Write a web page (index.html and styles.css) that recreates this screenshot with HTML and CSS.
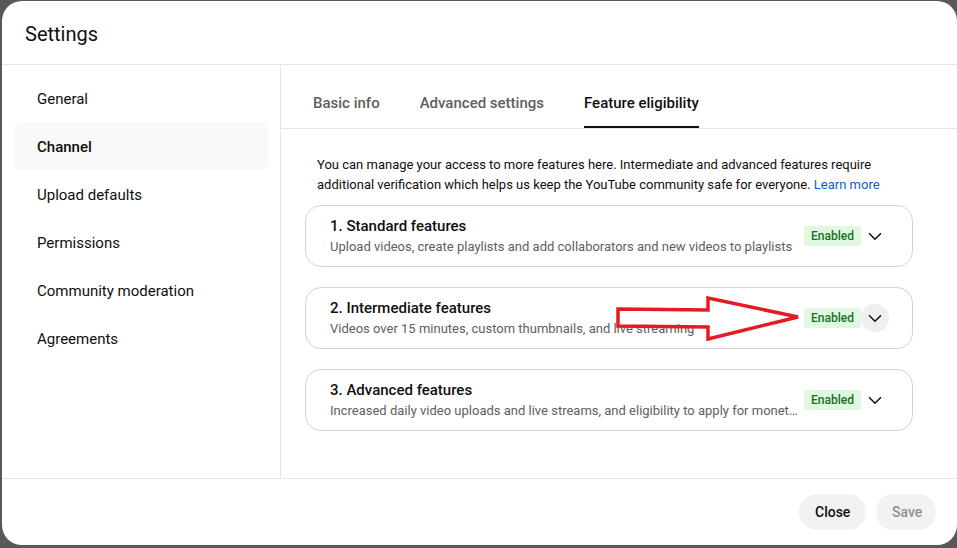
FILE: index.html
```html
<!DOCTYPE html>
<html lang="en">
<head>
<meta charset="utf-8">
<title>Settings</title>
<link rel="stylesheet" href="styles.css">
</head>
<body>
<div class="dialog">
  <div class="header"><h1 class="title">Settings</h1></div>
  <div class="body">
    <nav class="sidebar">
      <div class="nav-item">General</div>
      <div class="nav-item active">Channel</div>
      <div class="nav-item">Upload defaults</div>
      <div class="nav-item">Permissions</div>
      <div class="nav-item">Community moderation</div>
      <div class="nav-item">Agreements</div>
    </nav>
    <main class="main">
      <div class="tabs">
        <div class="tab">Basic info</div>
        <div class="tab">Advanced settings</div>
        <div class="tab active">Feature eligibility</div>
      </div>
      <div class="content">
        <p class="desc">You can manage your access to more features here. Intermediate and advanced features require additional verification which helps us keep the YouTube community safe for everyone. <a class="link">Learn more</a></p>
        <div class="cards">
          <div class="card">
            <div class="card-text">
              <div class="card-title">1. Standard features</div>
              <div class="card-sub">Upload videos, create playlists and add collaborators and new videos to playlists</div>
            </div>
            <span class="badge">Enabled</span>
            <span class="chev"><svg width="24" height="24" viewBox="0 0 24 24"><path d="M5.5 9l6.5 6.5L18.5 9" fill="none" stroke="#0f0f0f" stroke-width="1.6"/></svg></span>
          </div>
          <div class="card">
            <div class="card-text">
              <div class="card-title">2. Intermediate features</div>
              <div class="card-sub">Videos over 15 minutes, custom thumbnails, and live streaming</div>
            </div>
            <span class="badge">Enabled</span>
            <span class="chev hover"><svg width="24" height="24" viewBox="0 0 24 24"><path d="M5.5 9l6.5 6.5L18.5 9" fill="none" stroke="#0f0f0f" stroke-width="1.6"/></svg></span>
          </div>
          <div class="card">
            <div class="card-text">
              <div class="card-title">3. Advanced features</div>
              <div class="card-sub">Increased daily video uploads and live streams, and eligibility to apply for monetization</div>
            </div>
            <span class="badge">Enabled</span>
            <span class="chev"><svg width="24" height="24" viewBox="0 0 24 24"><path d="M5.5 9l6.5 6.5L18.5 9" fill="none" stroke="#0f0f0f" stroke-width="1.6"/></svg></span>
          </div>
        </div>
      </div>
    </main>
  </div>
  <div class="footer">
    <button class="btn">Close</button>
    <button class="btn disabled">Save</button>
  </div>
  <svg class="arrow" width="200" height="60" viewBox="0 0 200 60">
    <polygon points="3,13 93,14 93,2 183,21 93,43 93,31 3,30" fill="none" stroke="#e31b23" stroke-width="3.5" stroke-linejoin="miter"/>
  </svg>
</div>
</body>
</html>
```
FILE: styles.css
```css
* { box-sizing: border-box; }
html, body { margin: 0; padding: 0; }
body {
  background: #595959;
  font-family: Roboto, "Noto Sans", Arial, sans-serif;
  color: #0f0f0f;
  width: 957px;
  height: 548px;
  overflow: hidden;
}
.dialog {
  position: relative;
  margin: 1px 0 0 2px;
  width: 955px;
  height: 544px;
  background: #fff;
  border-radius: 20px;
  display: flex;
  flex-direction: column;
  overflow: hidden;
}
.header {
  height: 64px;
  border-bottom: 1px solid #e5e5e5;
  display: flex;
  align-items: center;
  padding: 2px 23px 0 23px;
}
.title {
  margin: 0;
  font-size: 20px;
  font-weight: 400;
  line-height: 28px;
}
.body {
  display: flex;
  height: 413px;
}
.sidebar {
  flex: none;
  width: 279px;
  border-right: 1px solid #e5e5e5;
  padding: 9px 12px 0 11px;
}
.nav-item {
  height: 48px;
  line-height: 50px;
  padding-left: 24px;
  font-size: 15px;
  border-radius: 8px;
  color: #0f0f0f;
}
.nav-item.active {
  background: #f9f9f9;
  font-weight: 500;
}
.main {
  flex: 1;
  min-width: 0;
  display: flex;
  flex-direction: column;
}
.tabs {
  height: 64px;
  flex: none;
  border-bottom: 1px solid #e5e5e5;
  display: flex;
  align-items: flex-end;
  gap: 40px;
  padding-left: 32px;
}
.tab {
  height: 48px;
  line-height: 46px;
  font-size: 15px;
  font-weight: 500;
  color: #606060;
  border-bottom: 2px solid transparent;
}
.tab.active {
  color: #0f0f0f;
  border-bottom-color: #0f0f0f;
}
.content {
  padding: 25px 44px 0 24px;
}
.desc {
  margin: 0 0 10px 12px;
  padding-top: 1px;
  max-width: 568px;
  font-size: 13px;
  line-height: 20px;
  color: #0f0f0f;
}
.link { color: #065fd4; }
.cards {
  display: flex;
  flex-direction: column;
  gap: 20px;
}
.card {
  height: 62px;
  border: 1px solid #d3d3d3;
  border-radius: 16px;
  padding: 0 23px 0 24px;
  display: flex;
  align-items: center;
  gap: 4px;
}
.card-text {
  flex: 1;
  min-width: 0;
  padding-bottom: 1px;
}
.card-title {
  font-size: 15px;
  font-weight: 500;
  line-height: 22px;
}
.card-sub {
  font-size: 13px;
  line-height: 20px;
  color: #606060;
  white-space: nowrap;
  overflow: hidden;
  text-overflow: ellipsis;
}
.badge {
  background: #dff8df;
  color: #17702a;
  font-size: 12px;
  font-weight: 500;
  line-height: 20px;
  padding: 0 7px;
  border-radius: 2px;
  flex: none;
}
.chev {
  width: 28px;
  height: 28px;
  border-radius: 50%;
  display: flex;
  align-items: center;
  justify-content: center;
  flex: none;
  margin-left: -4px;
}
.chev svg { width: 22px; height: 22px; }
.chev.hover { background: #efefef; }
.footer {
  flex: 1;
  border-top: 1px solid #e5e5e5;
  display: flex;
  align-items: center;
  justify-content: flex-end;
  gap: 10px;
  padding: 0 21px 0 0;
}
.btn {
  height: 36px;
  border: none;
  border-radius: 18px;
  background: #f2f2f2;
  font-family: Roboto, "Noto Sans", Arial, sans-serif;
  font-size: 14px;
  font-weight: 500;
  color: #0f0f0f;
  padding: 0 16px;
}
.btn:first-child { width: 67px; }
.btn.disabled { color: #909090; width: 60px; }
.arrow {
  position: absolute;
  left: 613px;
  top: 295px;
}
```
